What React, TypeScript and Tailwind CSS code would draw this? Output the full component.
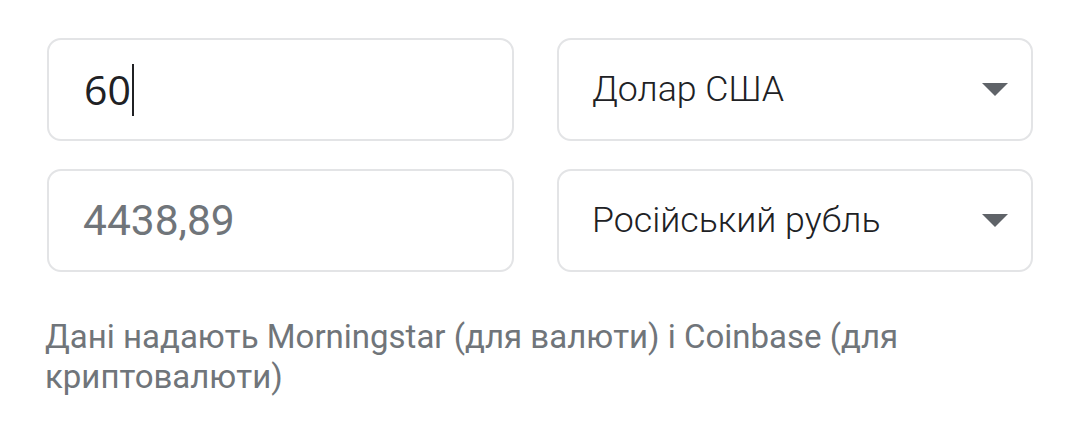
export default function App() {
  return (
    <div className="h-[421px] w-[1080px] bg-white px-[47px] pt-[38px] font-['Roboto',sans-serif]">
      <div className="grid grid-cols-[467px_476px] gap-x-[43px] gap-y-[28px]">
        <Field>
          <span className="flex items-center font-['Open_Sans',sans-serif] text-[41px] text-[#202124]">
            <span>60</span>
            <span className="ml-[1px] h-[52px] w-[2px] bg-[#202124]" />
          </span>
        </Field>
        <Select label="Долар США" />
        <Field>
          <span className="-ml-[1px] text-[42.5px] text-[#70757a]">4438,89</span>
        </Field>
        <Select label="Російський рубль" />
      </div>
      <p className="-ml-[2px] mt-[45px] text-[33px] leading-[40px] text-[#70757a]">
        Дані надають Morningstar (для валюти) і Coinbase (для криптовалюти)
      </p>
    </div>
  );
}

function Field({ children }: { children: React.ReactNode }) {
  return (
    <div className="flex h-[103px] items-center rounded-[14px] border-2 border-[#e3e4e6] pl-[35px]">
      {children}
    </div>
  );
}

function Select({ label }: { label: string }) {
  return (
    <div className="flex h-[103px] items-center justify-between rounded-[14px] border-2 border-[#e3e4e6] pl-[33px] pr-[23px]">
      <span className="text-[35.7px] font-light text-[#202124]">{label}</span>
      <svg width="26" height="13" viewBox="0 0 26 13" aria-hidden>
        <path d="M0 0h26L13 13z" fill="#5f6368" />
      </svg>
    </div>
  );
}
